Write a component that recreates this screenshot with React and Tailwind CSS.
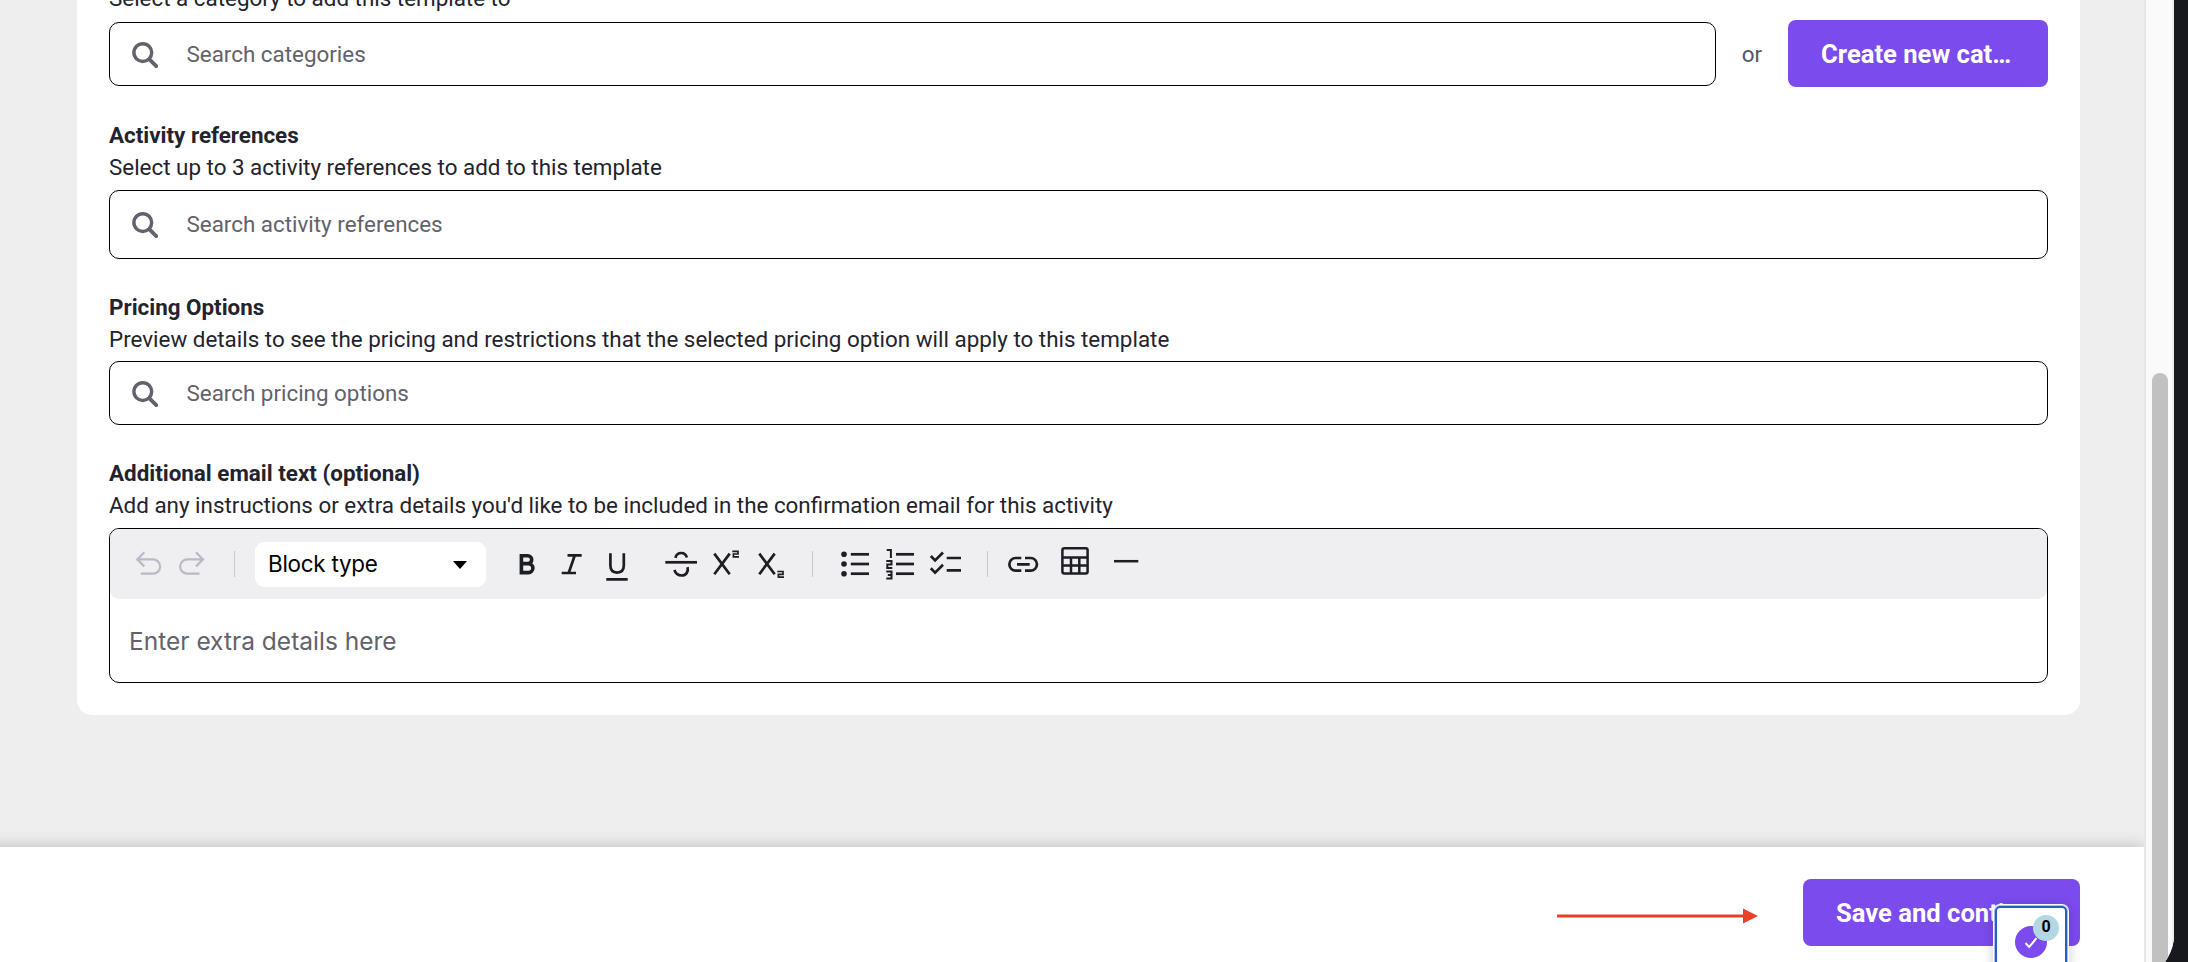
import clsx from "clsx"

const BULLET_ROWS = [8.3, 18, 27.7]

function Icon({ children, className, width = 2.7 }) {
  return (
    <svg
      viewBox="0 0 36 36"
      className={clsx("size-9 shrink-0", className || "text-[#1c1e24]")}
      fill="none"
      stroke="currentColor"
      strokeWidth={width}
    >
      {children}
    </svg>
  )
}

function SearchIcon() {
  return (
    <svg viewBox="0 0 26 26" className="size-[26px] shrink-0 text-[#62626c]" fill="none" stroke="currentColor">
      <circle cx="10.8" cy="10.6" r="8.9" strokeWidth="3.4" />
      <path d="M17.2 17.2 24.2 24.2" strokeWidth="3.8" strokeLinecap="round" />
    </svg>
  )
}

function SearchField({ placeholder, className }) {
  return (
    <div className={clsx("flex items-center rounded-[10px] border border-black bg-white pl-[22px]", className)}>
      <SearchIcon />
      <input
        placeholder={placeholder}
        className="ml-[28.5px] min-w-0 flex-1 bg-transparent text-[22.4px] outline-none placeholder:text-[#62626c]"
      />
    </div>
  )
}

function FieldText({ label, description, className }) {
  return (
    <div className={clsx("text-[22.4px] leading-8 whitespace-nowrap text-[#23232d]", className)}>
      <div className="font-bold">{label}</div>
      <div>{description}</div>
    </div>
  )
}

function Divider({ className }) {
  return <div className={clsx("h-[26px] w-px shrink-0 bg-[#c9c9d0]", className)} />
}

function Toolbar() {
  return (
    <div className="flex h-[70px] items-center rounded-[9px] bg-[#efeff1] pl-5">
      {/* History */}
      <Icon className="text-[#b9bac4]" width={2.2}>
        <path d="M14.3 6.3 7.3 13.4 14.3 20.4M7.3 13.4H23a7.1 7.1 0 0 1 0 14.3H10.8" />
      </Icon>
      <Icon className="ml-2 text-[#b9bac4]" width={2.2}>
        <path d="M22 6.3 29 13.4 22 20.4M29 13.4H13.3a7.1 7.1 0 0 0 0 14.3H25.5" />
      </Icon>
      <Divider className="ml-6" />

      <button className="ml-5 flex h-[45px] w-[231px] items-center justify-between rounded-[9px] bg-white pr-[19px] pl-[13px] font-[Inter,sans-serif] text-[22.4px] tracking-[-0.25px] text-black">
        Block type
        <svg viewBox="0 0 14 8" className="mt-px h-2 w-[14px]" fill="currentColor">
          <path d="M0 0h14L7 8z" />
        </svg>
      </button>

      {/* Text styles */}
      <div className="ml-[23px] flex gap-[9px]">
        <Icon width={3.6}>
          <path d="M12.4 9.8h6.4a3.9 3.9 0 0 1 0 7.8h-6.4m0 0h7a4.5 4.5 0 0 1 0 9h-7zM12.4 8v20.4" />
        </Icon>
        <Icon>
          <path d="M13.5 9.3H27.7M7.7 27H22M20.8 9.3 14.7 27" />
        </Icon>
        <Icon>
          <path d="M11.4 7.3v12.3c0 4.7 2.4 7 6.7 7s6.7-2.3 6.7-7V7.3M7.3 33.3h21.4" />
        </Icon>
      </div>
      <div className="ml-7 flex gap-[9px]">
        <Icon>
          <path d="M2.3 16.3H34" />
          <path d="M12.4 11.8C13.2 8.6 15.2 7 18.2 7s5 1.6 5.6 4.6M11.4 24c1.3 3.8 3.9 5.5 7.2 5.5 4.4 0 7-3.6 6-8.4" />
        </Icon>
        <Icon>
          <path d="M6.3 7.6 21.7 28.2M21.7 7.6 6.3 28.2" />
          <path d="M24.3 5.3H30V8H25.4V10.8H31" strokeWidth="1.7" />
        </Icon>
        <Icon>
          <path d="M6.3 7.6 21.7 28.2M21.7 7.6 6.3 28.2" />
          <path d="M24.3 25.5H30V28.3H25.4V31.1H31" strokeWidth="1.7" />
        </Icon>
      </div>
      <Divider className="ml-[23px]" />

      {/* Lists */}
      <div className="ml-6 flex gap-[9px]">
        <Icon>
          {BULLET_ROWS.map((y) => (
            <g key={y}>
              <circle cx="7" cy={y} r="2.8" fill="currentColor" stroke="none" />
              <path d={`M13.8 ${y}H32`} />
            </g>
          ))}
        </Icon>
        <Icon>
          {BULLET_ROWS.map((y) => (
            <path key={y} d={`M14 ${y}H32`} />
          ))}
          <path d="M4.7 3.9H8.9V12M4.3 15.1H9.5V18.5H5.3V22H10.3M4.3 25.6H9.5V32.6H4.3M5.8 29.1H9.5" strokeWidth="2" />
        </Icon>
        <Icon>
          <path d="M3.8 10 8.1 14.4 16 6.5M3.8 22.3 8.1 26.6 16 18.8" />
          <path d="M19.7 12H34M19.7 24.3H34" />
        </Icon>
      </div>
      <Divider className="ml-6" />

      {/* Inserts */}
      <Icon className="ml-[17px] text-[#1c1e24]">
        <path d="M16.3 12H10.7a6.35 6.35 0 0 0 0 12.7H16.3M20 12h5.6a6.35 6.35 0 0 1 0 12.7H20M12 18.3H24.7" />
      </Icon>
      <Icon className="ml-4 text-[#1c1e24]" width={2.5}>
        <rect x="5.4" y="2.2" width="25.2" height="25.4" rx="2" />
        <path d="M5 11.4H31M5 19.4H31M14 11.4V27.7M22.3 11.4V27.7" />
      </Icon>
      <Icon className="ml-[15px] text-[#1c1e24]" width={2.5}>
        <path d="M6 15.2H30.3" />
      </Icon>
    </div>
  )
}

function ChecklistWidget() {
  return (
    <div className="absolute top-[57px] right-[75px] h-[90px] w-[76px] rounded-[7px] bg-white p-[2px] shadow-[0_2px_12px_rgba(0,0,0,0.2)]">
      <div className="relative h-full rounded-[5px] border-2 border-[#245dc4] ring-1 ring-[#a9bfe9]">
        <div className="absolute top-[18px] left-[18px] flex size-8 items-center justify-center rounded-full bg-[#7b4bee]">
          <svg viewBox="0 0 14 12" className="mt-[2px] h-3 w-[14px]" fill="none" stroke="white" strokeWidth="2">
            <path d="M1.5 6 5.2 10 12.5 1.2" />
          </svg>
        </div>
        <div className="absolute top-[7px] left-9 flex size-[26px] items-center justify-center rounded-full bg-[#b4d7e4] pb-[2px] text-[16px] font-bold text-black">
          0
        </div>
      </div>
    </div>
  )
}

export default function App() {
  return (
    <div className="h-[962px] w-[2188px] overflow-hidden bg-[#17191d] font-[Roboto,sans-serif]">
      <div className="flex h-[982px] w-[2174px] overflow-hidden rounded-br-[48px] bg-[#eeeeee]">
        <div className="flex w-[2144px] flex-col">
          <main className="h-[847px] pl-[77px]">
            <div className="h-[715px] w-[2003px] overflow-hidden rounded-b-[15px] bg-white px-8">
              <div className="-mt-[18px] h-10 text-[22.4px] leading-8 text-[#23232d]">
                Select a category to add this template to
              </div>
              <div className="-mt-[2px] flex h-[67px] items-center">
                <SearchField placeholder="Search categories" className="h-16 w-[1607px] pt-[2px]" />
                <span className="w-[72px] pt-[2px] text-center text-[22.4px] text-[#55565f]">or</span>
                <button className="h-[67px] w-[260px] truncate rounded-lg bg-[#7b4bee] pt-[2px] pr-8 pl-[33px] text-left text-[25.6px] font-bold text-white">
                  Create new category
                </button>
              </div>

              <FieldText
                className="mt-8"
                label="Activity references"
                description="Select up to 3 activity references to add to this template"
              />
              <SearchField placeholder="Search activity references" className="mt-[7px] h-[69px]" />

              <FieldText
                className="mt-8"
                label="Pricing Options"
                description="Preview details to see the pricing and restrictions that the selected pricing option will apply to this template"
              />
              <SearchField placeholder="Search pricing options" className="mt-[6px] h-16 pt-px" />

              <FieldText
                className="mt-8"
                label="Additional email text (optional)"
                description="Add any instructions or extra details you'd like to be included in the confirmation email for this activity"
              />
              <div className="mt-[7px] h-[155px] rounded-[10px] border border-black">
                <Toolbar />
                <div className="pt-[24px] pl-[19px] font-[Inter,sans-serif] text-[24.5px] leading-9 text-[#62626c]">
                  Enter extra details here
                </div>
              </div>
            </div>
          </main>

          <footer className="relative -ml-8 flex flex-1 items-start justify-end bg-white pr-16 shadow-[0_0_16px_rgba(0,0,0,0.22)]">
            <svg viewBox="0 0 201 16" className="mt-[61px] mr-[45px] h-4 w-[201px]" fill="#e94128">
              <path d="M0 6.5h187v3H0zM186 .5 201 8l-15 7.5z" />
            </svg>
            <button className="mt-8 h-[67px] w-[277px] rounded-lg bg-[#7b4bee] pt-[2px] pl-[33px] text-left text-[25.6px] font-bold whitespace-nowrap text-white">
              Save and continue
            </button>
            <ChecklistWidget />
          </footer>
        </div>

        {/* Scrollbar */}
        <div className="z-10 w-[30px] border-r-2 border-l-2 border-r-[#ededed] border-l-[#e7e7e7] bg-[#fafafa] pt-[373px] pl-[6px]">
          <div className="h-[700px] w-4 rounded-t-full bg-[#c1c1c1]" />
        </div>
      </div>
    </div>
  )
}
